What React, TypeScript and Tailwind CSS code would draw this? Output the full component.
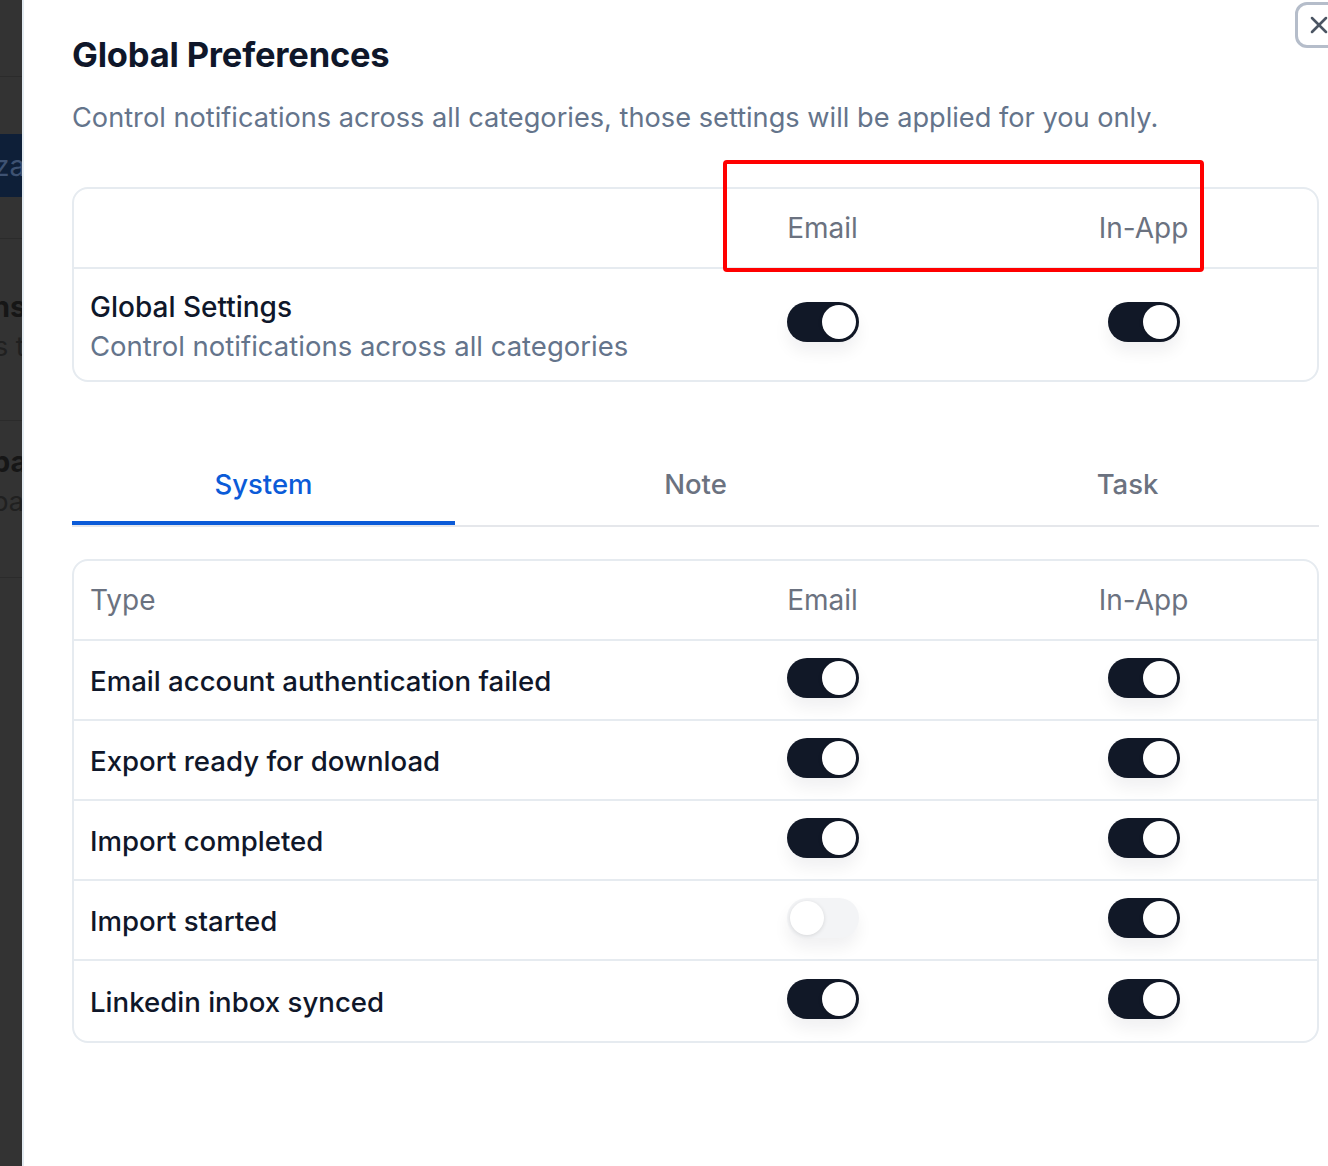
import { X } from 'lucide-react'

type Row = { label: string; email: boolean; inApp: boolean }

const rows: Row[] = [
    { label: 'Email account authentication failed', email: true, inApp: true },
    { label: 'Export ready for download', email: true, inApp: true },
    { label: 'Import completed', email: true, inApp: true },
    { label: 'Import started', email: false, inApp: true },
    { label: 'Linkedin inbox synced', email: true, inApp: true },
]

const tabs = ['System', 'Note', 'Task']

function Toggle({ on }: { on: boolean }) {
    return (
        <div
            className={`mb-[5px] flex h-[40px] w-[72px] items-center rounded-full px-[3px] shadow-[0_10px_16px_rgba(15,23,42,0.06)] ${on ? 'justify-end bg-[#111827]' : 'justify-start bg-[#f3f4f6]'
                }`}
        >
            <span className="h-[34px] w-[34px] rounded-full bg-white shadow-[0_1px_4px_rgba(0,0,0,0.12)]" />
        </div>
    )
}

// dimmed page behind the drawer, only a sliver is visible
function Backdrop() {
    return (
        <aside className="flex w-[22px] shrink-0 flex-col overflow-hidden bg-[#333333]">
            <div className="h-[77px] shrink-0 border-b border-[#2b2b2b]" />
            <div className="h-[57px] shrink-0" />
            <div className="flex h-[63px] shrink-0 items-center overflow-hidden whitespace-nowrap bg-[#0e1f38] text-[28px] text-[#3e5272]">
                <span className="ml-[-6px]">za</span>
            </div>
            <div className="h-[42px] shrink-0 border-b border-[#2b2b2b]" />
            <div className="flex h-[182px] shrink-0 flex-col justify-center overflow-hidden whitespace-nowrap border-b border-[#2b2b2b] pb-[6px]">
                <span className="ml-[-8px] text-[29px] font-bold leading-[40px] text-[#161616]">ns</span>
                <span className="ml-[-6px] text-[27px] leading-[40px] text-[#202020]">s t</span>
            </div>
            <div className="flex h-[157px] shrink-0 flex-col justify-center overflow-hidden whitespace-nowrap border-b border-[#2b2b2b] pb-[34px]">
                <span className="ml-[-8px] text-[29px] font-bold leading-[40px] text-[#161616]">pa</span>
                <span className="ml-[-8px] text-[27px] leading-[40px] text-[#202020]">ba</span>
            </div>
        </aside>
    )
}

export default function App() {
    return (
        <div className="relative flex h-[1166px] w-[1328px] overflow-hidden bg-white font-['Inter','Noto_Sans',sans-serif] antialiased">
            <Backdrop />

            <section className="flex-1 border-l-2 border-[#e2eaf0] pl-[48px] pr-[10px]">
                {/* Header */}
                <h2 className="pt-[36px] text-[34.5px] font-bold leading-[38px] tracking-[-0.2px] text-[#0f172a]">
                    Global Preferences
                </h2>
                <p className="mt-[26px] text-[27.2px] leading-[36px] text-[#64748b]">
                    Control notifications across all categories, those settings will be applied for you only.
                </p>

                {/* Global settings card */}
                <div className="mt-[51px] overflow-hidden rounded-[16px] border-2 border-[#e6ebf0]">
                    <div className="grid h-[80px] grid-cols-[1fr_321px_321px] items-center border-b-2 border-[#e6ebf0] pl-[16px] pr-[13px] text-[28px] text-[#6b7280]">
                        <span />
                        <span className="text-center">Email</span>
                        <span className="text-center">In-App</span>
                    </div>
                    <div className="grid h-[111px] grid-cols-[1fr_321px_321px] items-center pl-[16px] pr-[13px]">
                        <div className="pt-[4px]">
                            <p className="text-[28px] font-medium leading-[38px] text-[#0f172a]">Global Settings</p>
                            <p className="text-[27.5px] leading-[40px] text-[#64748b]">Control notifications across all categories</p>
                        </div>
                        <div className="flex justify-center">
                            <Toggle on />
                        </div>
                        <div className="flex justify-center">
                            <Toggle on />
                        </div>
                    </div>
                </div>

                {/* Tabs */}
                <div className="mt-[63px] flex gap-[49px] border-b-2 border-[#e5e7eb]">
                    {tabs.map((tab, i) => (
                        <button
                            key={tab}
                            type="button"
                            className={`flex h-[80px] w-[383px] items-center justify-center pt-[4px] text-[27.5px] font-medium ${i === 0 ? 'border-b-4 border-[#0b5bd8] text-[#0b5bd8]' : 'border-b-4 border-transparent text-[#6b7280]'
                                }`}
                        >
                            {tab}
                        </button>
                    ))}
                </div>

                {/* Per-type table */}
                <div className="mt-[32px] overflow-hidden rounded-[16px] border-2 border-[#e6ebf0]">
                    <div className="grid h-[80px] grid-cols-[1fr_321px_321px] items-center border-b-2 border-[#e6ebf0] pl-[16px] pr-[13px] text-[28px] text-[#6b7280]">
                        <span>Type</span>
                        <span className="text-center">Email</span>
                        <span className="text-center">In-App</span>
                    </div>
                    {rows.map((row, i) => (
                        <div
                            key={row.label}
                            className={`grid h-[80px] grid-cols-[1fr_321px_321px] items-center pl-[16px] pr-[13px] ${i < rows.length - 1 ? 'border-b-2 border-[#e6ebf0]' : ''
                                }`}
                        >
                            <span className="pt-[4px] text-[27.6px] font-medium text-[#0f172a]">{row.label}</span>
                            <div className="flex justify-center">
                                <Toggle on={row.email} />
                            </div>
                            <div className="flex justify-center">
                                <Toggle on={row.inApp} />
                            </div>
                        </div>
                    ))}
                </div>
            </section>

            {/* Close button */}
            <button
                type="button"
                className="absolute left-[1295px] top-[2px] flex h-[46px] w-[48px] items-center justify-center rounded-[12px] border-[3px] border-[#b5bdca] bg-white text-[#4b5563]"
            >
                <X size={28} strokeWidth={2.2} />
            </button>

            {/* Annotation box */}
            <div className="pointer-events-none absolute left-[723px] top-[160px] h-[112px] w-[481px] rounded-[4px] border-4 border-[#ff0000]" />
        </div>
    )
}
